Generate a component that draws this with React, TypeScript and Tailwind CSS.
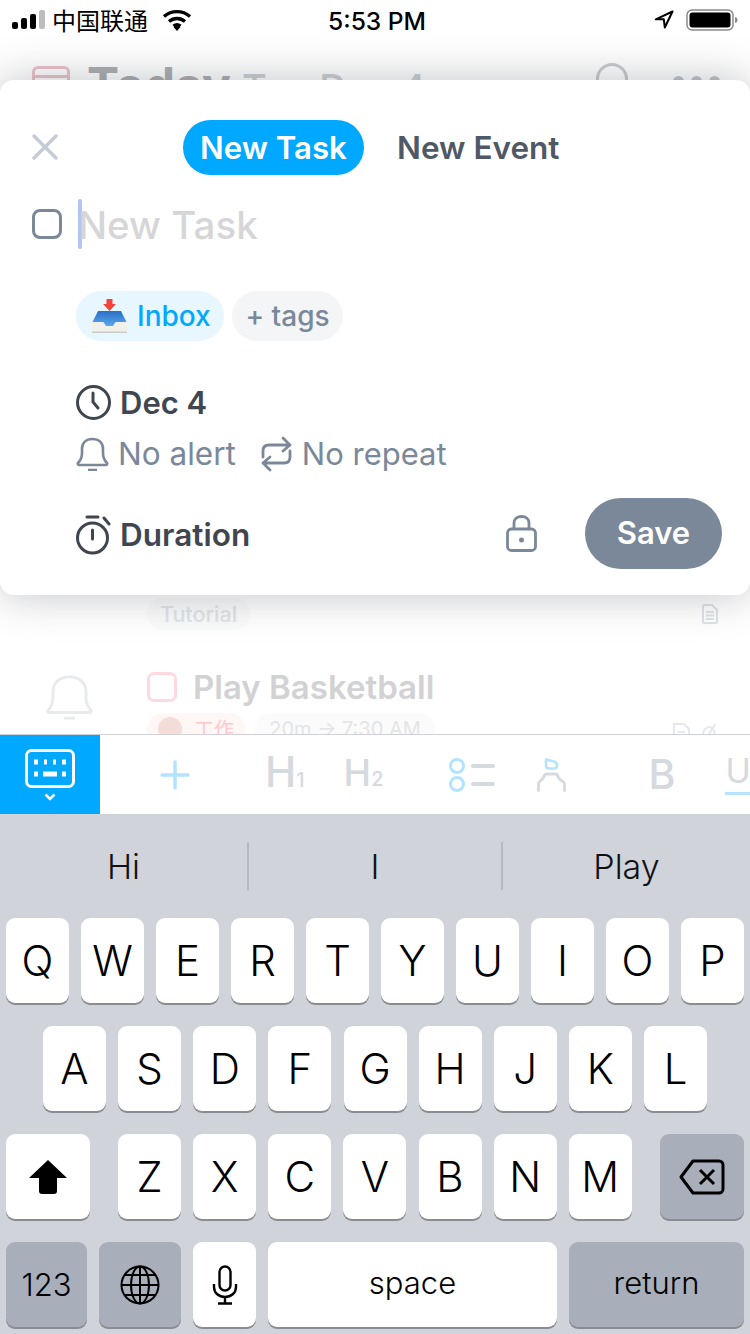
import React from 'react';

const INTER = 'font-["Inter","Noto_Sans_CJK_SC",sans-serif]';

const Key = ({ label, className = '', dark = false, children }: { label?: string; className?: string; dark?: boolean; children?: React.ReactNode }) => (
  <div
    className={`h-[85px] flex items-center justify-center rounded-[9px] text-black shadow-[0_2px_0_#8a8c92] ${
      dark ? 'bg-[#a9afba]' : 'bg-white'
    } ${className}`}
  >
    {label}
    {children}
  </div>
);

const Row = ({ letters }: { letters: string }) => (
  <>
    {letters.split('').map((l) => (
      <Key key={l} label={l} className="w-[63px] text-[42px] font-[350]" />
    ))}
  </>
);

const StatusBar = () => (
  <div className="h-10 shrink-0 flex items-center relative z-20 pl-3 pr-3 text-black">
    <svg width="34" height="20" viewBox="0 0 34 20">
      <rect x="0" y="12" width="6" height="7" rx="2" fill="#000" />
      <rect x="9" y="8" width="6" height="11" rx="2" fill="#000" />
      <rect x="18" y="4" width="6" height="15" rx="2" fill="#000" />
      <rect x="27" y="0" width="6" height="19" rx="2" fill="#bdbdbd" />
    </svg>
    <span className='ml-[6px] w-[110px] text-[24px] font-["Noto_Sans_CJK_SC",sans-serif] leading-none'>中国联通</span>
    <svg width="30" height="24" viewBox="0 0 30 24" fill="none" stroke="#000" strokeWidth="3.4">
      <path d="M2 8.5c7.500-6.500 18.500-6.500 26 0" />
      <path d="M7 13.500c4.700-4 11.300-4 16 0" />
      <path d="M11.500 18c2-1.500 5-1.500 7 0" />
      <path d="M15 23l-3.500-4c2-1.500 5-1.500 7 0z" fill="#000" stroke="none" />
    </svg>
    <span className={`${INTER} ml-[136px] mt-[2px] w-[326px] text-[24.6px] font-medium leading-none`}>5:53 PM</span>
    <svg width="20" height="20" viewBox="0 0 20 20" fill="none" stroke="#000" strokeWidth="2" strokeLinejoin="round">
      <path d="M18.500 1.500L1.800 9.300h8l1 8.200z" />
    </svg>
    <svg className="ml-[12px]" width="52" height="22" viewBox="0 0 52 22">
      <rect x="1" y="1" width="46" height="20" rx="5" fill="none" stroke="#8a8a8a" strokeWidth="1.500" />
      <rect x="3.500" y="3.500" width="41" height="15" rx="3" fill="#000" />
      <path d="M49 8c2 .3 2.500 1.500 2.500 3s-.5 2.700-2.500 3z" fill="#8a8a8a" />
    </svg>
  </div>
);

const Behind = () => (
  <div className={`${INTER} absolute inset-0 overflow-hidden`}>
    <div className="flex items-start pl-8 pr-[30px] pt-[26px] h-[70px]">
      <div className="w-[38px] h-[42px] rounded-md border-[3px] border-[#ecc3cb] pt-[6px]">
        <div className="h-[3px] bg-[#ecc3cb]" />
      </div>
      <div className="ml-[17px] -mt-[5px] flex items-baseline leading-none">
        <span className="text-[48px] font-bold text-[#aeafb2]">Today</span>
        <span className="ml-[11px] text-[38px] font-medium text-[#ccd0d4]">Tue Dec 4</span>
      </div>
      <div className="ml-auto -mt-[3px] w-[32px] h-[42px] rounded-full border-[3px] border-[#c9cbcf]" />
      <div className="ml-[45px] mt-[10px] flex gap-[7px]">
        <div className="w-[11px] h-[11px] rounded-full bg-[#c3c5c9]" />
        <div className="w-[11px] h-[11px] rounded-full bg-[#c3c5c9]" />
        <div className="w-[11px] h-[11px] rounded-full bg-[#c3c5c9]" />
      </div>
    </div>
    <div className="mt-[488px] flex items-center pl-[147px] pr-[32px] h-[32px]">
      <div className="h-[32px] w-[103px] rounded-full bg-[#fafbfb] text-[21.5px] font-medium text-[#e0e3e7] flex items-center justify-center">Tutorial</div>
      <svg className="ml-auto" width="16" height="20" viewBox="0 0 16 20" fill="none" stroke="#dfe2e6" strokeWidth="2">
        <path d="M1 2.500A1.500 1.500 0 0 1 2.500 1H10l5 5v11.500a1.500 1.500 0 0 1-1.500 1.500h-11A1.500 1.500 0 0 1 1 17.500z" />
        <path d="M4 8h8M4 11.500h8M4 15h8" />
      </svg>
    </div>
    <div className="mt-[42px] flex pl-[46px]">
      <svg className="mt-[3px]" width="47" height="45" viewBox="0 0 47 48" preserveAspectRatio="none" fill="none" stroke="#e8ebee" strokeWidth="3">
        <path d="M2 38c4-5 5-8 5-14V18C7 8 14 2 23.500 2S40 8 40 18v6c0 6 1 9 5 14 .6 1-.2 2-1 2H3c-.8 0-1.600-1-1-2z" />
        <path d="M18 46h11" />
      </svg>
      <div className="ml-[54px]">
        <div className="flex items-center h-[30px]">
          <div className="w-[30px] h-[30px] rounded-[7px] border-[3px] border-[#ffd9df]" />
          <span className="ml-[16px] text-[33px] font-semibold text-[#d2d2d4] leading-none">Play Basketball</span>
        </div>
        <div className="flex items-start mt-[11px] gap-[10px]">
          <div className="h-[32px] w-[98px] rounded-full bg-[#fff7f6] flex items-center pl-[11px]">
            <div className="w-[24px] h-[24px] rounded-full bg-[#f4dcd8]" />
            <span className='ml-[12px] text-[20px] text-[#ffc9cc] font-["Noto_Sans_CJK_SC",sans-serif]'>工作</span>
          </div>
          <div className="h-[32px] w-[180px] rounded-full bg-[#fbfbfb] flex items-center justify-center text-[20px] text-[#e4e5e7]">20m → 7:30 AM</div>
          <svg className="ml-[228px] mt-[10px]" width="17" height="20" viewBox="0 0 17 20" fill="none" stroke="#e6e8eb" strokeWidth="2">
            <path d="M1 1h10l5 5v13H1z" />
            <path d="M5 9h7" />
          </svg>
          <svg className="ml-[1px] mt-[10px]" width="16" height="20" viewBox="0 0 16 20" fill="none" stroke="#e6e8eb" strokeWidth="2">
            <ellipse cx="8" cy="12" rx="6" ry="8" />
            <path d="M3 20L14 1" />
          </svg>
        </div>
      </div>
    </div>
  </div>
);

const InboxEmoji = () => (
  <svg width="35" height="35" viewBox="0 0 35 35">
    <defs>
      <linearGradient id="tray" x1="0" y1="0" x2="0" y2="1">
        <stop offset="0" stopColor="#2a6fc4" />
        <stop offset="1" stopColor="#5cabef" />
      </linearGradient>
    </defs>
    <path d="M14.500 0h6v5H24l-6.500 7L11 5h3.500z" fill="#f4443a" />
    <path d="M6 12h23l6 12H23l-1 4h-9l-1-4H0z" fill="url(#tray)" />
    <path d="M0 23h11c1.500 0 2 4 3.500 4h6c1.500 0 2-4 3.500-4h11v10c0 .6-.4 1-1 1H1c-.6 0-1-.4-1-1z" fill="#f1f1ec" />
    <path d="M0 32.500h35V34H0z" fill="#c9cccc" />
  </svg>
);

const Modal = () => (
  <div className={`${INTER} absolute top-[40px] inset-x-0 h-[515px] rounded-[14px] bg-white shadow-[0_0_44px_rgba(30,35,45,0.28)]`}>
    <div className="flex items-center pl-8 pt-[40px]">
      <svg className="mb-[2px]" width="26" height="26" viewBox="0 0 26 26" stroke="#c5ccd6" strokeWidth="3.500" strokeLinecap="round">
        <path d="M2 2l22 22M24 2L2 24" />
      </svg>
      <div className="ml-[125px] w-[181px] h-[55px] pt-[1px] rounded-full bg-[#00a8ff] text-white text-[31.2px] font-semibold flex items-center justify-center">New Task</div>
      <span className="ml-[33px] mt-[1px] text-[31.5px] font-semibold text-[#4f5865]">New Event</span>
    </div>
    <div className="flex items-center h-[50px] mt-[24px] pl-8">
      <div className="w-[30px] h-[30px] rounded-[8px] border-[3px] border-[#7a8899]" />
      <div className="ml-[16px] w-[4px] h-[50px] rounded-full bg-[#b3c3f5]" />
      <span className="-ml-[4px] mt-[4px] text-[38.5px] font-medium text-[#d6d6d8]">New Task</span>
    </div>
    <div className="flex gap-2 mt-[42px] pl-[76px]">
      <div className="h-[50px] w-[148px] rounded-full bg-[#e8f6ff] flex items-center pl-[16px] gap-[10px]">
        <InboxEmoji />
        <span className="text-[28px] font-medium text-[#00a8ff]">Inbox</span>
      </div>
      <div className="h-[50px] w-[111px] rounded-full bg-[#f4f5f7] flex items-center justify-center text-[28px] font-medium text-[#7a8899]">+ tags</div>
    </div>
    <div className="flex items-center gap-[9px] mt-[44px] pl-[76px] h-[35px]">
      <svg width="35" height="35" viewBox="0 0 35 35" fill="none" stroke="#3f4650" strokeWidth="3" strokeLinecap="round">
        <circle cx="17.500" cy="17.500" r="16" />
        <path d="M17 8v9l5 6" />
      </svg>
      <span className="mt-[2px] text-[31px] font-semibold text-[#3f4650]">Dec 4</span>
    </div>
    <div className="flex items-center mt-[17px] pl-[76px] h-[34px] text-[31.5px] text-[#7a8899]">
      <svg width="33" height="34" viewBox="0 0 33 34" fill="none" stroke="#7a8899" strokeWidth="2.600">
        <path d="M2 26c3-3 4-6 4-10v-4C6 6 10 2 16.500 2S27 6 27 12v4c0 4 1 7 4 10 .6 1-.2 2-1 2H3c-.8 0-1.600-1-1-2z" />
        <path d="M12 33h9" />
      </svg>
      <span className="ml-[9px]">No alert</span>
      <svg className="ml-[25px]" width="31" height="36" viewBox="0 0 31 36" fill="none" stroke="#7a8899" strokeWidth="2.800" strokeLinecap="round" strokeLinejoin="round">
        <path d="M2 21v-6c0-4 2-6 6-6h21M22 2l7 7-7 6" />
        <path d="M29 15v6c0 4-2 6-6 6H2M9 21l-7 6 7 7" />
      </svg>
      <span className="ml-[10px] text-[31px]">No repeat</span>
    </div>
    <div className="flex items-center mt-[27px] pl-[76px] pr-[28px] h-[71px]">
      <svg className="mt-[2px]" width="35" height="40" viewBox="0 0 35 40" fill="none" stroke="#3f4650" strokeWidth="3" strokeLinecap="round">
        <circle cx="16.500" cy="23" r="15" />
        <path d="M16.500 15v9M11 2h11M28 3l5 6" />
      </svg>
      <span className="ml-[9px] mt-[2px] text-[31.5px] font-semibold text-[#3f4650]">Duration</span>
      <svg className="ml-auto" width="31" height="37" viewBox="0 0 31 37" fill="none" stroke="#7a8899" strokeWidth="2.800">
        <rect x="1.500" y="14" width="28" height="21.500" rx="4" />
        <path d="M8 14V8c0-4 3-6.500 7.500-6.500S23 4 23 8v6" />
        <circle cx="15.500" cy="25" r="2.500" fill="#7a8899" stroke="none" />
      </svg>
      <div className="ml-[48px] w-[137px] h-[71px] rounded-full bg-[#7a8899] text-white text-[31px] font-semibold flex items-center justify-center">Save</div>
    </div>
  </div>
);

const Toolbar = () => (
  <div className={`${INTER} relative z-10 h-[80px] shrink-0 flex bg-white border-t border-[#cfd1d6] text-[#d5d9e0] overflow-hidden`}>
    <div className="w-[100px] shrink-0 h-full bg-[#00a8ff] flex flex-col items-center justify-center">
      <svg width="50" height="40" viewBox="0 0 50 40" fill="none">
        <rect x="1.500" y="1.500" width="47" height="36" rx="5" stroke="#fff" strokeWidth="3" />
        <path d="M9 13h4M19 13h3M28 13h3M37 13h4M9 25h4M18 25h14M37 25h4" stroke="#fff" strokeWidth="5" />
      </svg>
      <svg className="mt-[4px]" width="12" height="8" viewBox="0 0 12 8" fill="none" stroke="#fff" strokeWidth="2.500">
        <path d="M1.500 1.500L6 6l4.500-4.500" />
      </svg>
    </div>
    <div className="flex items-center ml-[60px] w-[30px] shrink-0">
      <svg width="30" height="30" viewBox="0 0 30 30" stroke="#b3e3ff" strokeWidth="3.500" strokeLinecap="round">
        <path d="M15 2v26M2 15h26" />
      </svg>
    </div>
    <div className="ml-[75px] flex items-baseline pt-[16px] leading-none font-medium">
      <span className="text-[42px]">H</span>
      <span className="text-[20px]">1</span>
    </div>
    <div className="ml-[39px] flex items-baseline pt-[19px] leading-none font-medium">
      <span className="text-[37px]">H</span>
      <span className="text-[20px]">2</span>
    </div>
    <div className="ml-[66px] flex items-center shrink-0">
      <svg width="46" height="34" viewBox="0 0 46 34" fill="none">
        <circle cx="8" cy="8" r="6.500" stroke="#b3e3ff" strokeWidth="3" />
        <circle cx="8" cy="26" r="6.500" stroke="#b3e3ff" strokeWidth="3" />
        <path d="M24 8h20M24 26h20" stroke="#d5d9e0" strokeWidth="4" strokeLinecap="round" />
      </svg>
    </div>
    <div className="ml-[42px] flex items-center shrink-0">
      <svg width="29" height="34" viewBox="0 0 29 34" fill="none" strokeLinecap="round" strokeLinejoin="round">
        <path d="M9 1.500l8 2c2 .5 3 2 3 4 0 2-1.500 3-3 3h-5c-2 0-3-1-3-3z" stroke="#b3e3ff" strokeWidth="2.500" />
        <path d="M1.500 32.500V26c0-3 4-3.500 5-6.500 .6-2 1.500-3.500 3-3.500h9c1.500 0 2.400 1.500 3 3.500 1 3 6 3.500 6 6.500v6.500" stroke="#d5d9e0" strokeWidth="2.800" />
      </svg>
    </div>
    <span className="ml-[82px] self-center text-[41px] font-medium leading-none">B</span>
    <div className="ml-[50px] pt-[19px] flex flex-col shrink-0">
      <span className="text-[34px] leading-none">U</span>
      <div className="mt-[4px] w-[30px] h-[3px] bg-[#b3e3ff]" />
    </div>
  </div>
);

const Keyboard = () => (
  <div className={`${INTER} h-[520px] shrink-0 bg-[#d0d3da]`}>
    <div className="h-[104px] flex items-center text-[34px] font-[350] text-[#111]">
      <div className="w-[247px] text-center">Hi</div>
      <div className="w-[2px] h-[48px] bg-[#b6b9c0]" />
      <div className="w-[252px] text-center">I</div>
      <div className="w-[2px] h-[48px] bg-[#b6b9c0]" />
      <div className="flex-1 text-center">Play</div>
    </div>
    <div className="flex flex-col gap-[23px]">
      <div className="flex gap-3 px-[6px]">
        <Row letters="QWERTYUIOP" />
      </div>
      <div className="flex gap-[12.13px] pl-[43px]">
        <Row letters="ASDFGHJKL" />
      </div>
      <div className="flex px-[6px]">
        <Key className="w-[84px]">
          <svg width="38" height="34" viewBox="0 0 38 34">
            <path d="M19 0L38 18H28v13a3 3 0 0 1-3 3H13a3 3 0 0 1-3-3V18H0z" fill="#000" />
          </svg>
        </Key>
        <div className="flex gap-[12.13px] ml-[28px]">
          <Row letters="ZXCVBNM" />
        </div>
        <Key dark className="w-[84px] ml-[28px]">
          <svg width="46" height="36" viewBox="0 0 46 36" fill="none" stroke="#000" strokeWidth="3" strokeLinejoin="round">
            <path d="M14 2h26a4 4 0 0 1 4 4v24a4 4 0 0 1-4 4H14L2 18z" />
            <path d="M21 11l14 14M35 11L21 25" />
          </svg>
        </Key>
      </div>
      <div className="flex gap-3 px-[6px] text-[31px] font-[350]">
        <Key dark label="123" className="w-[81px] pt-[2px]" />
        <Key dark className="w-[82px]">
          <svg width="40" height="40" viewBox="0 0 40 40" fill="none" stroke="#000" strokeWidth="2">
            <circle cx="20" cy="20" r="18.500" />
            <ellipse cx="20" cy="20" rx="9" ry="18.500" />
            <path d="M20 1.500v37M1.500 20h37M4.500 10h31M4.500 30h31" />
          </svg>
        </Key>
        <Key className="w-[63px]">
          <svg width="26" height="40" viewBox="0 0 26 40" fill="none" stroke="#000" strokeWidth="2.400">
            <rect x="7.500" y="1.500" width="11" height="24" rx="5.500" />
            <path d="M2 19v3c0 6 5 10 11 10s11-4 11-10v-3M13 32v6M6 38.500h14" />
          </svg>
        </Key>
        <Key label="space" className="w-[289px] pb-[2px]" />
        <Key dark label="return" className="flex-1 pb-[2px]" />
      </div>
    </div>
  </div>
);

export default function App() {
  return (
    <div className="w-[750px] h-[1334px] flex flex-col bg-white overflow-hidden">
      <StatusBar />
      <div className="relative flex-1">
        <Behind />
        <Modal />
      </div>
      <Toolbar />
      <Keyboard />
    </div>
  );
}
